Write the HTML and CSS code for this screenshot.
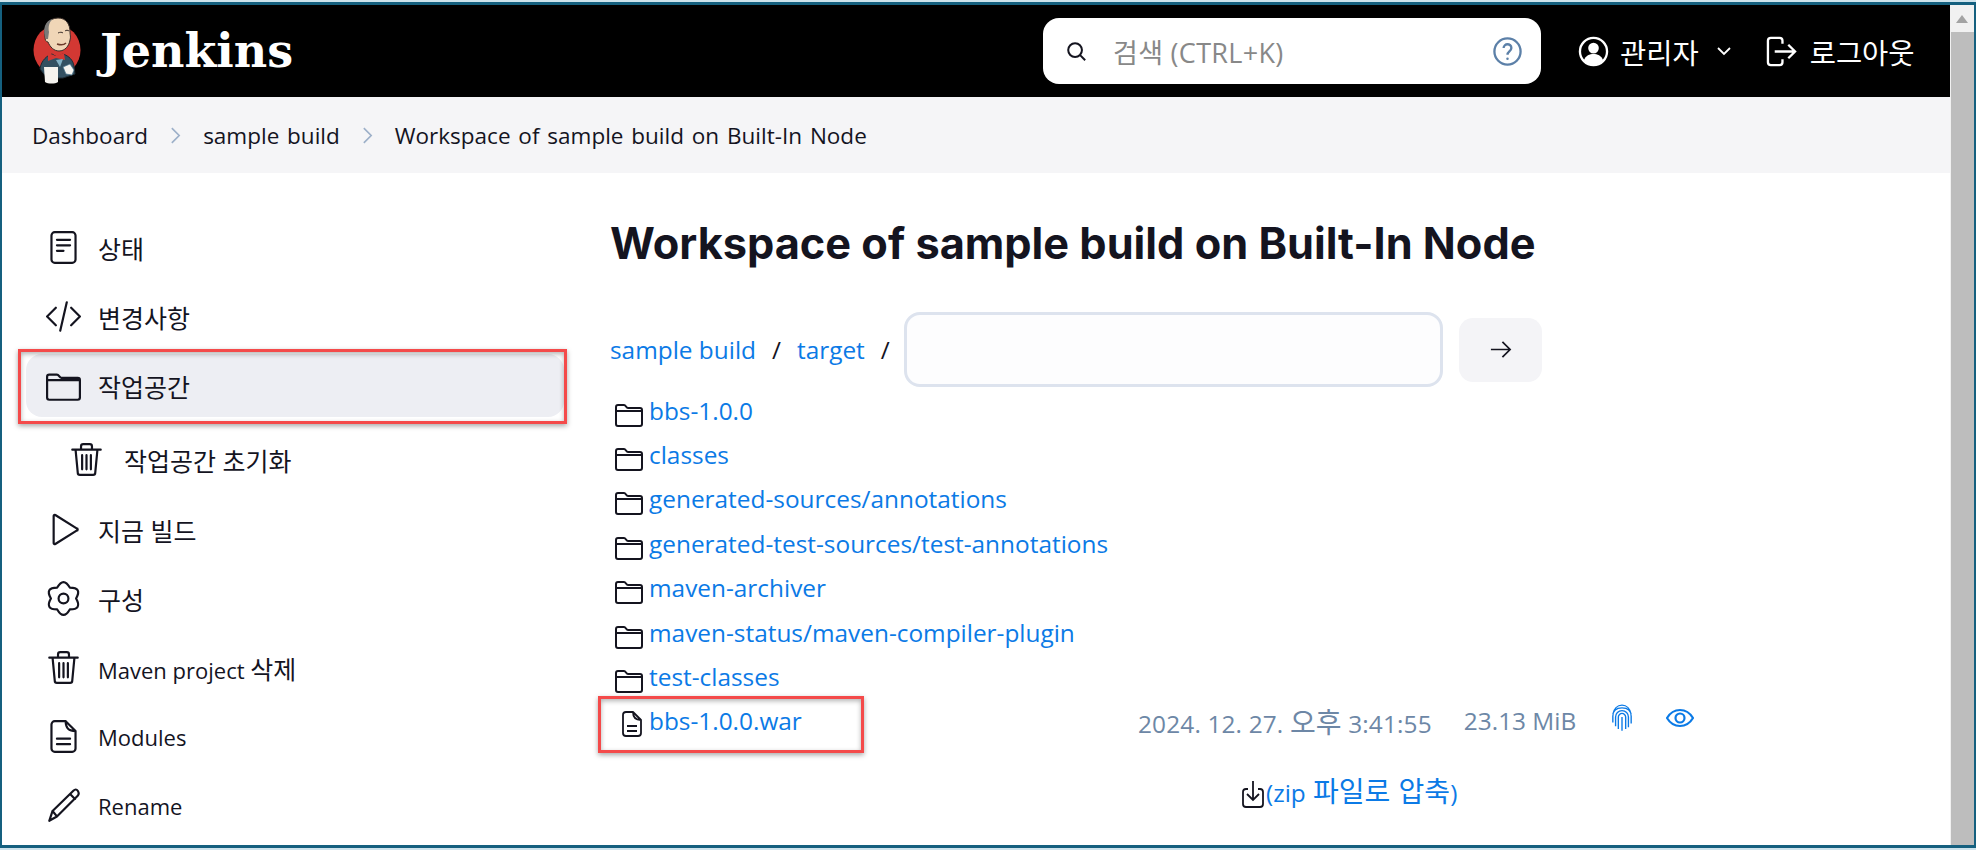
FILE: index.html
```html
<!DOCTYPE html>
<html lang="ko">
<head>
    <meta charset="UTF-8">
    <title>Workspace of sample build on Built-In Node</title>
    <link rel="stylesheet" href="styles.css">
</head>
<body>
<div class="frame">
    <div class="page">
        <header class="topbar">
            <a class="brand">
                <svg class="logo" viewBox="0 0 48 68">
                    <ellipse cx="24" cy="33" rx="23.5" ry="25" fill="#d33833"/>
                    <path d="M7 52c1-9 8-14 12-15l5 3 6-3c6 2 10 6 11 12l1 8-12 4H14z" fill="#335061" stroke="#1e2b33"/>
                    <path d="M12 20C10 10 15 1 25 1c8 0 12 6 12 14 0 3 1 5 0 8-1 6-5 11-11 11-5 0-9-4-11-9-2 0-3-2-3-5z" fill="#f0d6b7" stroke="#3a2f2a"/>
                    <path d="M13 22C9 13 12 3 20 2c-4 3-5 8-4 13l-1 7z" fill="#7a7a78"/>
                    <path d="M25 16c2-1 4-1 5 0M32 14c1-1 3-1 4 0" stroke="#3a2f2a" fill="none"/>
                    <path d="M24 27c3 1 7 1 9-1" stroke="#6b3a2a" stroke-width="1.5" fill="none"/>
                    <path d="M15 36l8 3 8-3 1 7-9-2-8 3z" fill="#d33833"/>
                    <path d="M23 43l7-1-3 8z" fill="#81b0c4"/>
                    <path d="M11 50h14v15c-3 2-10 2-13 0z" fill="#f5f3ee"/>
                    <path d="M30 50l7-3 4 6-2 5-6-1z" fill="#f5f3ee" stroke="#49728b" stroke-width=".7"/>
                </svg>
                <span class="brand-name">Jenkins</span>
            </a>
            <div class="search">
                <svg class="search-icon" viewBox="0 0 24 24"><circle cx="11" cy="11" r="7.5"/><path d="M16.5 16.5L22 22"/></svg>
                <span class="search-hint">검색 (CTRL+K)</span>
                <svg class="help-icon" viewBox="0 0 32 32"><circle cx="16" cy="16" r="13.5"/><path d="M12 12.5c0-2.500 2-4 4-4s4 1.500 4 3.800c0 3.500-4 3.700-4 7"/><circle class="dot" cx="16" cy="23.500" r="1.300"/></svg>
            </div>
            <a class="top-link user">
                <svg class="top-icon" viewBox="0 0 32 32"><circle cx="16" cy="16" r="14"/><circle class="fill" cx="16" cy="12.500" r="5.500"/><path class="fill" d="M6 25c2-5 6-6.500 10-6.500s8 1.500 10 6.500c-2.500 3-6 4.500-10 4.500S8.500 28 6 25z"/></svg>
                <span>관리자</span>
                <svg class="caret" viewBox="0 0 14 10"><path d="M1 2l6 6 6-6"/></svg>
            </a>
            <a class="top-link logout">
                <svg class="top-icon" viewBox="0 0 32 32"><path d="M17 8V5a3 3 0 0 0-3-3H5a3 3 0 0 0-3 3v22a3 3 0 0 0 3 3h9a3 3 0 0 0 3-3v-3"/><path d="M9 16h21M23 9l7 7-7 7"/></svg>
                <span>로그아웃</span>
            </a>
        </header>

        <nav class="crumbs">
            <a>Dashboard</a>
            <svg class="crumb-sep" viewBox="0 0 12 18"><path d="M2 1l8 8-8 8"/></svg>
            <a>sample build</a>
            <svg class="crumb-sep" viewBox="0 0 12 18"><path d="M2 1l8 8-8 8"/></svg>
            <a>Workspace of sample build on Built-In Node</a>
        </nav>

        <div class="main">
            <aside class="side">
                <a class="task">
                    <svg class="task-icon" viewBox="0 0 32 32"><rect x="5" y="2" width="22" height="28" rx="3"/><path d="M10 9h12M10 14h12M10 19h6"/></svg>
                    <span class="ko">상태</span>
                </a>
                <a class="task">
                    <svg class="task-icon" viewBox="0 0 32 32"><path d="M9 8l-8 8 8 8M23 8l8 8-8 8M19 3l-6 26"/></svg>
                    <span class="ko">변경사항</span>
                </a>
                <a class="task current">
                    <svg class="task-icon" viewBox="0 0 32 32"><path d="M1 8a2 2 0 0 1 2-2h7c2 0 2 3 4 3h15a2 2 0 0 1 2 2v16a2 2 0 0 1-2 2H3a2 2 0 0 1-2-2zM1 11h30"/></svg>
                    <span class="ko">작업공간</span>
                </a>
                <a class="task sub">
                    <svg class="task-icon" viewBox="0 0 32 32"><path d="M3 7h26M11 7V4a2 2 0 0 1 2-2h6a2 2 0 0 1 2 2v3M6 7l2 21a2 2 0 0 0 2 2h12a2 2 0 0 0 2-2l2-21M12 12v13M16 12v13M20 12v13"/></svg>
                    <span class="ko">작업공간 초기화</span>
                </a>
                <a class="task">
                    <svg class="task-icon" viewBox="0 0 32 32"><path d="M7 3.500v25a1 1 0 0 0 1.500.8L28 17a1 1 0 0 0 0-2L8.500 2.700A1 1 0 0 0 7 3.500z"/></svg>
                    <span class="ko">지금 빌드</span>
                </a>
                <a class="task">
                    <svg class="task-icon" viewBox="0 0 32 32"><circle cx="16" cy="16" r="4.500"/><path d="M27.500 16Q33.300 26 21.750 26Q16 36 10.250 26Q-1.300 26 4.500 16Q-1.300 6 10.250 6Q16-4 21.750 6Q33.300 6 27.500 16z"/></svg>
                    <span class="ko">구성</span>
                </a>
                <a class="task">
                    <svg class="task-icon" viewBox="0 0 32 32"><path d="M3 7h26M11 7V4a2 2 0 0 1 2-2h6a2 2 0 0 1 2 2v3M6 7l2 21a2 2 0 0 0 2 2h12a2 2 0 0 0 2-2l2-21M12 12v13M16 12v13M20 12v13"/></svg>
                    <span>Maven project <span class="ko">삭제</span></span>
                </a>
                <a class="task">
                    <svg class="task-icon" viewBox="0 0 32 32"><path d="M18 2H8a3 3 0 0 0-3 3v22a3 3 0 0 0 3 3h16a3 3 0 0 0 3-3V11zM18 2c0 6 2 9 9 9M10 18h12M10 23h12"/></svg>
                    <span>Modules</span>
                </a>
                <a class="task">
                    <svg class="task-icon" viewBox="0 0 32 32"><path d="M3 30l3-9L25 2.500c1.500-1.500 3-1.500 4 0s1.500 3 0 4.500L10 26zM6 21l4 5M22 5.500l4.500 4.500"/></svg>
                    <span>Rename</span>
                </a>
            </aside>

            <section class="content">
                <h1 class="title">Workspace of sample build on Built-In Node</h1>
                <div class="path-row">
                    <a class="link">sample build</a>
                    <span class="slash">/</span>
                    <a class="link">target</a>
                    <span class="slash">/</span>
                    <input class="path-input" type="text">
                    <div class="go-btn">
                        <svg viewBox="0 0 24 24"><path d="M2 12h20M14 4l8 8-8 8"/></svg>
                    </div>
                </div>

                <table class="files">
                    <tr><td class="name" colspan="2"><svg class="f-icon" viewBox="0 0 28 24"><path d="M1 4a2 2 0 0 1 2-2h6c2 0 2 3 4 3h12a2 2 0 0 1 2 2v14a2 2 0 0 1-2 2H3a2 2 0 0 1-2-2zM1 8h26"/></svg><a class="link">bbs-1.0.0</a></td></tr>
                    <tr><td class="name" colspan="2"><svg class="f-icon" viewBox="0 0 28 24"><path d="M1 4a2 2 0 0 1 2-2h6c2 0 2 3 4 3h12a2 2 0 0 1 2 2v14a2 2 0 0 1-2 2H3a2 2 0 0 1-2-2zM1 8h26"/></svg><a class="link">classes</a></td></tr>
                    <tr><td class="name" colspan="2"><svg class="f-icon" viewBox="0 0 28 24"><path d="M1 4a2 2 0 0 1 2-2h6c2 0 2 3 4 3h12a2 2 0 0 1 2 2v14a2 2 0 0 1-2 2H3a2 2 0 0 1-2-2zM1 8h26"/></svg><a class="link">generated-sources/annotations</a></td></tr>
                    <tr><td class="name" colspan="2"><svg class="f-icon" viewBox="0 0 28 24"><path d="M1 4a2 2 0 0 1 2-2h6c2 0 2 3 4 3h12a2 2 0 0 1 2 2v14a2 2 0 0 1-2 2H3a2 2 0 0 1-2-2zM1 8h26"/></svg><a class="link">generated-test-sources/test-annotations</a></td></tr>
                    <tr><td class="name" colspan="2"><svg class="f-icon" viewBox="0 0 28 24"><path d="M1 4a2 2 0 0 1 2-2h6c2 0 2 3 4 3h12a2 2 0 0 1 2 2v14a2 2 0 0 1-2 2H3a2 2 0 0 1-2-2zM1 8h26"/></svg><a class="link">maven-archiver</a></td></tr>
                    <tr><td class="name" colspan="2"><svg class="f-icon" viewBox="0 0 28 24"><path d="M1 4a2 2 0 0 1 2-2h6c2 0 2 3 4 3h12a2 2 0 0 1 2 2v14a2 2 0 0 1-2 2H3a2 2 0 0 1-2-2zM1 8h26"/></svg><a class="link">maven-status/maven-compiler-plugin</a></td></tr>
                    <tr><td class="name" colspan="2"><svg class="f-icon" viewBox="0 0 28 24"><path d="M1 4a2 2 0 0 1 2-2h6c2 0 2 3 4 3h12a2 2 0 0 1 2 2v14a2 2 0 0 1-2 2H3a2 2 0 0 1-2-2zM1 8h26"/></svg><a class="link">test-classes</a></td></tr>
                    <tr>
                        <td class="name file-cell"><svg class="f-icon doc" viewBox="0 0 20 26"><path d="M11 1H4a3 3 0 0 0-3 3v18a3 3 0 0 0 3 3h12a3 3 0 0 0 3-3V9zM11 1c0 5 2 8 8 8M5 15h10M5 20h10"/></svg><a class="link">bbs-1.0.0.war</a></td>
                        <td class="meta">
                            <span class="date">2024. 12. 27. <span class="ko-big">오후</span> 3:41:55</span>
                            <span class="size">23.13 MiB</span>
                            <svg class="print" viewBox="0 0 24 32"><path d="M2 12C3 6 7 2 12 2s9 4 10 10M2 21v-7c0-6 4-9 10-9s10 3 10 9v8M5 25v-10c0-4 3-7 7-7s7 3 7 7v11M8 28V15c0-2 2-4 4-4s4 2 4 4v13M12 15v15"/></svg>
                            <svg class="eye" viewBox="0 0 28 20"><path d="M1 10c3-5 8-8 13-8s10 3 13 8c-3 5-8 8-13 8S4 15 1 10z"/><circle cx="14" cy="10" r="4.500"/></svg>
                        </td>
                    </tr>
                </table>

                <div class="zip">
                    <svg class="zip-icon" viewBox="0 0 22 28"><path d="M6 9H4a3 3 0 0 0-3 3v12a3 3 0 0 0 3 3h14a3 3 0 0 0 3-3V12a3 3 0 0 0-3-3h-2M11 1v18M5 14l6 6 6-6"/></svg><a class="link">(zip <span class="ko-big">파일로 압축</span>)</a>
                </div>
            </section>
        </div>

        <!-- red boxes drawn on top of the screenshot -->
        <div class="mark mark-side"></div>
        <div class="mark mark-file"></div>
    </div>
    <div class="scrollbar">
        <div class="sb-btn"><span class="sb-arrow"></span></div>
        <div class="sb-thumb"></div>
    </div>
</div>
</body>
</html>
```

FILE: styles.css
```css
* {
    box-sizing: border-box;
}
html, body {
    margin: 0;
    height: 100%;
    overflow: hidden;
}
body {
    font-family: "Open Sans", "Noto Sans CJK KR", sans-serif;
    font-size: 22px;
    color: #14141f;
    background: #cfe3ec;
    padding: 2px 0 2px 0;
}
a {
    text-decoration: none;
}
.ko {
    font-size: 25px;
}
.ko-big {
    font-size: 28px;
}
.frame {
    display: flex;
    height: 846px;
    border: 3px solid #15607f;
    border-left-width: 2px;
    border-right-width: 2px;
    background: #fff;
}
.page {
    position: relative;
    flex: 1;
    min-width: 0;
    overflow: hidden;
}

/* header */
.topbar {
    display: flex;
    align-items: center;
    height: 92px;
    background: #000;
    color: #fff;
    padding-left: 31px;
}
.brand {
    display: flex;
    align-items: center;
    width: 1010px;
}
.logo {
    width: 48px;
    height: 68px;
}
.brand-name {
    margin-left: 19px;
    font-family: "DejaVu Serif", serif;
    font-weight: bold;
    font-size: 46px;
    color: #fff;
}
.search {
    display: flex;
    align-items: center;
    width: 498px;
    height: 66px;
    background: #fff;
    border-radius: 16px;
    padding: 0 18px 0 22px;
}
.search-icon {
    width: 22px;
    height: 22px;
    fill: none;
    stroke: #14141f;
    stroke-width: 2.2;
}
.search-hint {
    margin-left: 26px;
    flex: 1;
    color: #888;
    font-size: 27px;
    letter-spacing: .3px;
}
.help-icon {
    width: 31px;
    height: 31px;
    fill: none;
    stroke: #5c80a8;
    stroke-width: 2.400;
}
.help-icon .dot {
    fill: #5c80a8;
    stroke: none;
}
.top-link {
    display: flex;
    align-items: center;
    color: #fff;
    font-size: 28.5px;
}
.top-icon {
    width: 31px;
    height: 31px;
    fill: none;
    stroke: #fff;
    stroke-width: 2.400;
}
.top-icon .fill {
    fill: #fff;
    stroke: none;
}
.user {
    margin-left: 37px;
}
.user span {
    margin-left: 11px;
}
.logout span {
    margin-left: 13px;
}
.caret {
    width: 14px;
    height: 10px;
    margin-left: 18px;
    fill: none;
    stroke: #fff;
    stroke-width: 1.800;
}
.logout {
    margin-left: 35px;
}

/* breadcrumb */
.crumbs {
    display: flex;
    align-items: center;
    gap: 22px;
    height: 76px;
    padding-left: 30px;
    background: #f5f5f7;
    font-size: 22.5px;
    word-spacing: 2px;
    color: #14141f;
}
.crumb-sep {
    width: 11px;
    height: 17px;
    fill: none;
    stroke: #9db0c9;
    stroke-width: 1.800;
}

/* sidebar */
.main {
    display: flex;
}
.side {
    width: 562px;
    padding: 40px 0 0 24px;
    flex: none;
}
.task {
    display: flex;
    align-items: center;
    height: 69px;
    padding-left: 20px;
    color: #14141f;
    font-size: 22px;
    border-radius: 16px;
}
.task > span {
    margin-left: 17px;
}
.task-icon {
    width: 35px;
    height: 35px;
    flex: none;
    fill: none;
    stroke: #14141f;
    stroke-width: 2;
    stroke-linecap: round;
    stroke-linejoin: round;
}
.task.current {
    height: 63px;
    margin: 3px 0;
    background: #edeef3;
}
.task.sub {
    padding-left: 43px;
    margin: 8px 0 1px;
}
.task.sub > span {
    margin-left: 20px;
}

/* workspace */
.content {
    flex: 1;
    padding: 43px 0 0 46px;
}
.title {
    margin: 0;
    font-family: Inter, sans-serif;
    font-size: 43.3px;
    font-weight: 700;
    line-height: 54px;
    white-space: nowrap;
    color: #14141f;
}
.path-row {
    display: flex;
    align-items: center;
    margin: 42px 0 1px;
    height: 75px;
}
.link {
    color: #0b7ae6;
}
.path-row .link, .path-row .slash {
    font-size: 24.4px;
}
.slash {
    margin: 0 16px;
}
.path-row .slash:nth-of-type(2) {
    margin-right: 14px;
}
.path-input {
    width: 539px;
    height: 75px;
    border: 3px solid #dde3ee;
    border-radius: 16px;
    background: #fdfdfe;
    outline: none;
}
.go-btn {
    display: flex;
    align-items: center;
    justify-content: center;
    width: 83px;
    height: 64px;
    margin-left: 16px;
    background: #f4f4f7;
    border-radius: 14px;
}
.go-btn svg {
    width: 23px;
    height: 23px;
    fill: none;
    stroke: #14141f;
    stroke-width: 1.800;
}
.files {
    margin-top: 0;
    border-collapse: collapse;
    font-size: 24.4px;
}
.files td {
    height: 44.400px;
    padding: 0;
}
.name {
    white-space: nowrap;
}
.file-cell {
    width: 528px;
}
.f-icon {
    width: 28px;
    height: 24px;
    margin: 0 6px 0 5px;
    vertical-align: -7px;
    fill: none;
    stroke: #14141f;
    stroke-width: 2;
    stroke-linejoin: round;
}
.f-icon.doc {
    width: 20px;
    height: 26px;
    margin: 0 7px 0 12px;
    stroke-width: 1.800;
}
.meta {
    display: flex;
    align-items: center;
    height: 44px;
    color: #6d87a6;
    font-size: 24.4px;
    white-space: nowrap;
}
.date {
    letter-spacing: .15px;
}
.size {
    margin-left: 32px;
}
.print {
    width: 22px;
    height: 30px;
    margin-left: 35px;
    margin-top: -6px;
    fill: none;
    stroke: #0b7ae6;
    stroke-width: 1.500;
}
.eye {
    width: 28px;
    height: 20px;
    margin-left: 33px;
    margin-top: -6px;
    fill: none;
    stroke: #0b7ae6;
    stroke-width: 2.200;
}
.zip {
    margin-top: 27px;
    padding-left: 632px;
    font-size: 24.4px;
    word-spacing: 1px;
    white-space: nowrap;
}
.zip-icon {
    width: 22px;
    height: 28px;
    margin-right: 2px;
    vertical-align: -6px;
    fill: none;
    stroke: #14141f;
    stroke-width: 1.800;
}

/* annotation boxes */
.mark {
    position: absolute;
    border: 3px solid #f44a4a;
    box-shadow: 0 2px 5px rgba(0, 0, 0, 0.35), inset 0 2px 5px rgba(0, 0, 0, 0.3);
}
.mark-side {
    left: 16px;
    top: 344px;
    width: 549px;
    height: 75px;
}
.mark-file {
    left: 596px;
    top: 691px;
    width: 266px;
    height: 57px;
}

/* scrollbar */
.scrollbar {
    width: 24px;
    flex: none;
    background: #f1f1f1;
    overflow: hidden;
}
.sb-btn {
    display: flex;
    justify-content: center;
    align-items: center;
    height: 27px;
}
.sb-arrow {
    width: 0;
    height: 0;
    border-left: 6px solid transparent;
    border-right: 6px solid transparent;
    border-bottom: 8px solid #a3a3a3;
}
.sb-thumb {
    height: 820px;
    margin-left: 1px;
    background: #bdbdbd;
}
```
